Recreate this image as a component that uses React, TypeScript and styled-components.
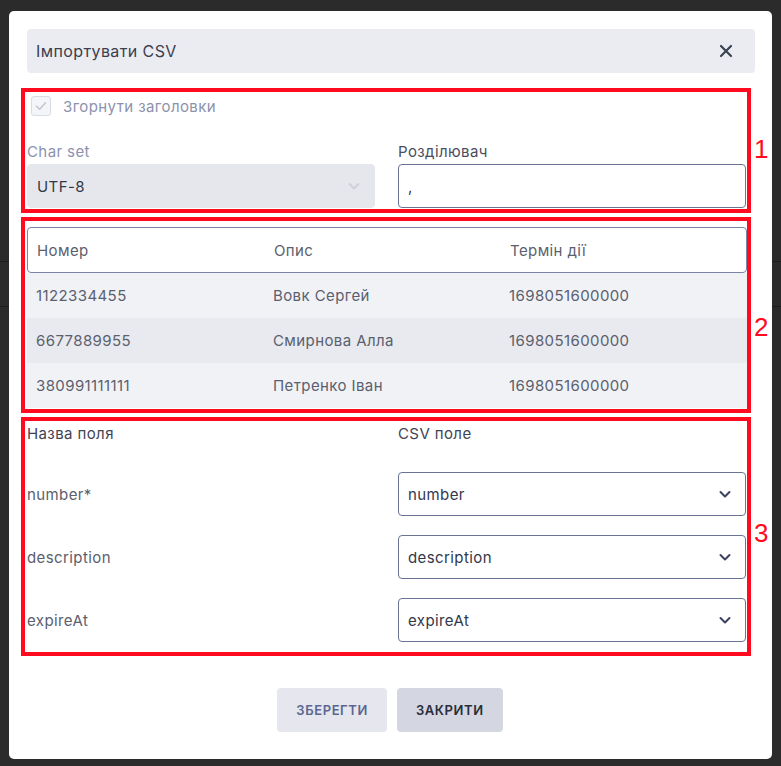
import React from "react";
import styled, { createGlobalStyle } from "styled-components";

const GlobalStyle = createGlobalStyle`
  html, body {
    margin: 0;
    padding: 0;
    height: 100%;
  }
  body {
    font-family: Inter, "Noto Sans", sans-serif;
    letter-spacing: 0.4px;
    background: #2b2b2b;
  }
  * {
    box-sizing: border-box;
  }
`;

type Row = { number: string; description: string; expireAt: string };

const rows: Row[] = [
  { number: "1122334455", description: "Вовк Сергей", expireAt: "1698051600000" },
  { number: "6677889955", description: "Смирнова Алла", expireAt: "1698051600000" },
  { number: "380991111111", description: "Петренко Іван", expireAt: "1698051600000" },
];

const fields = ["number*", "description", "expireAt"];
const csvFields = ["number", "description", "expireAt"];

const Chevron = ({ color }: { color: string }) => (
  <svg width="14" height="14" viewBox="0 0 14 14" fill="none">
    <path
      d="M2.5 5L7 9.5L11.5 5"
      stroke={color}
      strokeWidth="2"
      strokeLinecap="round"
      strokeLinejoin="round"
    />
  </svg>
);

export default function App() {
  return (
    <>
      <GlobalStyle />
      <Backdrop>
        <Modal>
          <Header>
            <Title>Імпортувати CSV</Title>
            <CloseButton aria-label="close">
              <svg width="14" height="14" viewBox="0 0 14 14">
                <path
                  d="M2 2L12 12M12 2L2 12"
                  stroke="#3b4256"
                  strokeWidth="2.2"
                  strokeLinecap="round"
                />
              </svg>
            </CloseButton>
          </Header>

          <Marked $top={19}>
            <SettingsBox>
              <CheckRow>
                <CheckBox>
                  <svg width="14" height="14" viewBox="0 0 14 14" fill="none">
                    <path
                      d="M2.5 7.2L5.6 10.2L11.5 3.8"
                      stroke="#c3c6d4"
                      strokeWidth="1.6"
                      strokeLinecap="round"
                      strokeLinejoin="round"
                    />
                  </svg>
                </CheckBox>
                <CheckLabel>Згорнути заголовки</CheckLabel>
              </CheckRow>
              <TwoCols>
                <Field>
                  <FieldLabel $muted>Char set</FieldLabel>
                  <SelectBox $disabled>
                    <span>UTF-8</span>
                    <Chevron color="#cfd2dc" />
                  </SelectBox>
                </Field>
                <Field>
                  <FieldLabel>Розділювач</FieldLabel>
                  <TextBox>,</TextBox>
                </Field>
              </TwoCols>
            </SettingsBox>
            <Mark $y={44}>1</Mark>
          </Marked>

          <Marked $top={12}>
            <TableBox>
              <HeadRow>
                <HeadCell>Номер</HeadCell>
                <HeadCell>Опис</HeadCell>
                <HeadCell>Термін дії</HeadCell>
              </HeadRow>
              {rows.map((r, i) => (
                <BodyRow key={r.number} $odd={i % 2 === 1}>
                  <Cell>{r.number}</Cell>
                  <Cell>{r.description}</Cell>
                  <Cell>{r.expireAt}</Cell>
                </BodyRow>
              ))}
            </TableBox>
            <Mark $y={93}>2</Mark>
          </Marked>

          <Marked $top={12}>
            <MappingBox>
              <MapHeader>
                <MapHead>Назва поля</MapHead>
                <MapHead>CSV поле</MapHead>
              </MapHeader>
              {fields.map((f, i) => (
                <MapRow key={f}>
                  <MapLabel>{f}</MapLabel>
                  <SelectBox>
                    <span>{csvFields[i]}</span>
                    <Chevron color="#3b4160" />
                  </SelectBox>
                </MapRow>
              ))}
            </MappingBox>
            <Mark $y={99}>3</Mark>
          </Marked>

          <Buttons>
            <Button $variant="save">Зберегти</Button>
            <Button $variant="close">Закрити</Button>
          </Buttons>
        </Modal>
      </Backdrop>
    </>
  );
}

const Backdrop = styled.div`
  min-height: 766px;
  padding: 11px 9px 7px;
  background-color: #2b2b2b;
  background-image: linear-gradient(
      to bottom,
      transparent 261px,
      #1c1c1c 261px,
      #1c1c1c 262px,
      transparent 262px,
      transparent 306px,
      #1c1c1c 306px,
      #1c1c1c 307px,
      transparent 307px
    );
`;

const Modal = styled.div`
  width: 763px;
  height: 748px;
  background: #ffffff;
  border-radius: 5px;
  padding: 18px 17px 0 16px;
  display: flex;
  flex-direction: column;
`;

const Header = styled.div`
  height: 44px;
  margin-left: 2px;
  background: #ebecf1;
  border-radius: 4px;
  display: flex;
  align-items: center;
  justify-content: space-between;
  padding: 0 22px 0 9px;
`;

const Title = styled.div`
  font-size: 16px;
  color: #3a3e4e;
`;

const CloseButton = styled.button`
  border: none;
  background: none;
  padding: 0;
  display: flex;
  cursor: pointer;
`;

const Marked = styled.div<{ $top: number }>`
  position: relative;
  width: 722px;
  margin-top: ${(p) => p.$top}px;
  outline: 4px solid #ff0a1e;
`;

const Mark = styled.span<{ $y: number }>`
  position: absolute;
  left: calc(100% + 7px);
  top: ${(p) => p.$y}px;
  font-family: "Liberation Sans", Arial, sans-serif;
  font-size: 26px;
  letter-spacing: 0;
  line-height: 1;
  color: #ff0a1e;
`;

const SettingsBox = styled.div`
  height: 117px;
  padding: 4px 0 0 2px;
`;

const CheckRow = styled.div`
  display: flex;
  align-items: center;
  gap: 12px;
  height: 20px;
  padding-left: 4px;
`;

const CheckBox = styled.span`
  width: 20px;
  height: 20px;
  border: 1.5px solid #d9dbe5;
  border-radius: 3px;
  background: #f4f5f8;
  display: flex;
  align-items: center;
  justify-content: center;
`;

const CheckLabel = styled.span`
  font-size: 15px;
  color: #8c92ad;
`;

const TwoCols = styled.div`
  display: grid;
  grid-template-columns: 348px 348px;
  column-gap: 23px;
  margin-top: 26px;
`;

const Field = styled.div`
  display: flex;
  flex-direction: column;
  gap: 3px;
`;

const FieldLabel = styled.div<{ $muted?: boolean }>`
  font-size: 15px;
  line-height: 19px;
  color: ${(p) => (p.$muted ? "#8b92b0" : "#4a4e5f")};
`;

const SelectBox = styled.div<{ $disabled?: boolean }>`
  height: 44px;
  border-radius: 4px;
  display: flex;
  align-items: center;
  justify-content: space-between;
  padding: 0 13px 0 9px;
  font-size: 15px;
  color: #33374a;
  background: ${(p) => (p.$disabled ? "#e6e7ec" : "#ffffff")};
  border: 1px solid ${(p) => (p.$disabled ? "#e6e7ec" : "#6b7394")};
`;

const TextBox = styled.div`
  height: 44px;
  border: 1px solid #6b7394;
  border-radius: 4px;
  display: flex;
  align-items: center;
  padding: 0 9px;
  font-size: 15px;
  color: #33374a;
`;

const TableBox = styled.div`
  height: 188px;
  padding: 6px 0 0 2px;
`;

const tableColumns = "237px 236px 1fr";

const HeadRow = styled.div`
  display: grid;
  grid-template-columns: ${tableColumns};
  height: 46px;
  align-items: center;
  background: #ffffff;
  border: 1px solid #7a83a8;
  border-radius: 4px;
`;

const HeadCell = styled.div`
  padding-left: 9px;
  font-size: 15px;
  color: #5b5f6e;
`;

const BodyRow = styled.div<{ $odd: boolean }>`
  display: grid;
  grid-template-columns: ${tableColumns};
  height: 45px;
  align-items: center;
  background: ${(p) => (p.$odd ? "#e9eaef" : "#f1f2f6")};
`;

const Cell = styled.div`
  padding-left: 9px;
  font-size: 15px;
  color: #5b5f6e;
`;

const MappingBox = styled.div`
  height: 231px;
  padding: 2px 0 0 2px;
  display: flex;
  flex-direction: column;
  gap: 19px;
`;

const MapHeader = styled.div`
  display: grid;
  grid-template-columns: 348px 348px;
  column-gap: 23px;
  height: 20px;
  align-items: center;
  margin-bottom: 10px;
`;

const MapRow = styled.div`
  display: grid;
  grid-template-columns: 348px 348px;
  column-gap: 23px;
  height: 44px;
  align-items: center;
`;

const MapHead = styled.div`
  font-size: 15px;
  color: #3f4354;
`;

const MapLabel = styled.div`
  font-size: 15px;
  color: #5a5e6e;
`;

const Buttons = styled.div`
  display: flex;
  justify-content: center;
  gap: 10px;
  margin-top: 36px;
`;

const Button = styled.button<{ $variant: "save" | "close" }>`
  height: 44px;
  padding: 0 19px;
  border: none;
  border-radius: 4px;
  font-family: inherit;
  font-size: 13px;
  font-weight: 600;
  letter-spacing: 0.6px;
  text-transform: uppercase;
  cursor: pointer;
  background: ${(p) => (p.$variant === "save" ? "#e6e7ee" : "#d4d7e1")};
  color: ${(p) => (p.$variant === "save" ? "#5b6690" : "#2a2d3a")};
`;
